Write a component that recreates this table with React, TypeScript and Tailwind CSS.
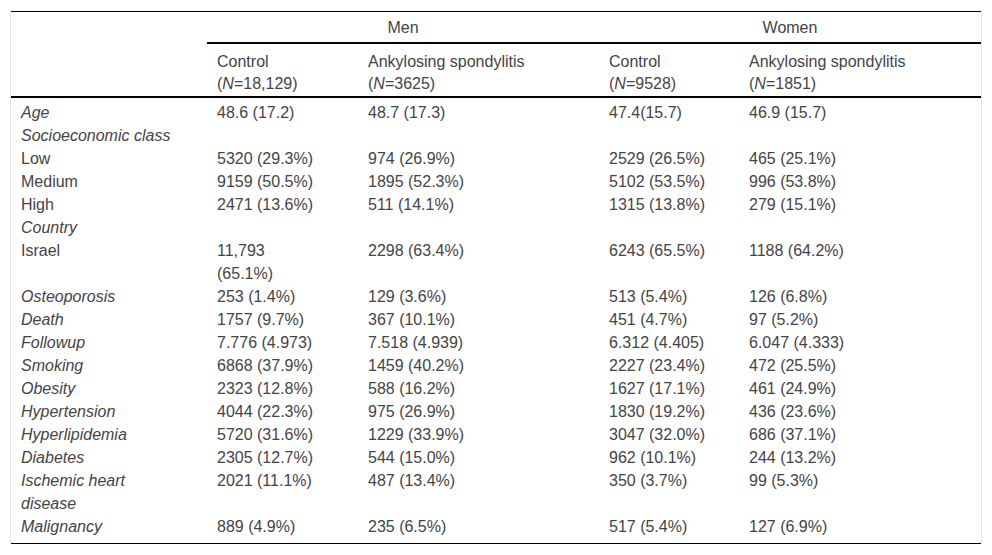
import { Fragment } from "react";

type Row = {
  label: string;
  italic?: boolean;
  cells?: string[];
};

const rows: Row[] = [
  { label: "Age", italic: true, cells: ["48.6 (17.2)", "48.7 (17.3)", "47.4(15.7)", "46.9 (15.7)"] },
  { label: "Socioeconomic class", italic: true },
  { label: "Low", cells: ["5320 (29.3%)", "974 (26.9%)", "2529 (26.5%)", "465 (25.1%)"] },
  { label: "Medium", cells: ["9159 (50.5%)", "1895 (52.3%)", "5102 (53.5%)", "996 (53.8%)"] },
  { label: "High", cells: ["2471 (13.6%)", "511 (14.1%)", "1315 (13.8%)", "279 (15.1%)"] },
  { label: "Country", italic: true },
  { label: "Israel", cells: ["11,793\n(65.1%)", "2298 (63.4%)", "6243 (65.5%)", "1188 (64.2%)"] },
  { label: "Osteoporosis", italic: true, cells: ["253 (1.4%)", "129 (3.6%)", "513 (5.4%)", "126 (6.8%)"] },
  { label: "Death", italic: true, cells: ["1757 (9.7%)", "367 (10.1%)", "451 (4.7%)", "97 (5.2%)"] },
  { label: "Followup", italic: true, cells: ["7.776 (4.973)", "7.518 (4.939)", "6.312 (4.405)", "6.047 (4.333)"] },
  { label: "Smoking", italic: true, cells: ["6868 (37.9%)", "1459 (40.2%)", "2227 (23.4%)", "472 (25.5%)"] },
  { label: "Obesity", italic: true, cells: ["2323 (12.8%)", "588 (16.2%)", "1627 (17.1%)", "461 (24.9%)"] },
  { label: "Hypertension", italic: true, cells: ["4044 (22.3%)", "975 (26.9%)", "1830 (19.2%)", "436 (23.6%)"] },
  { label: "Hyperlipidemia", italic: true, cells: ["5720 (31.6%)", "1229 (33.9%)", "3047 (32.0%)", "686 (37.1%)"] },
  { label: "Diabetes", italic: true, cells: ["2305 (12.7%)", "544 (15.0%)", "962 (10.1%)", "244 (13.2%)"] },
  { label: "Ischemic heart\ndisease", italic: true, cells: ["2021 (11.1%)", "487 (13.4%)", "350 (3.7%)", "99 (5.3%)"] },
  { label: "Malignancy", italic: true, cells: ["889 (4.9%)", "235 (6.5%)", "517 (5.4%)", "127 (6.9%)"] },
];

function Lines({ text }: { text: string }) {
  return (
    <>
      {text.split("\n").map((p, i) => (
        <Fragment key={i}>
          {i > 0 && <br />}
          {p}
        </Fragment>
      ))}
    </>
  );
}

function GroupHead({ n }: { n: string }) {
  return (
    <>
      <br />(<i>N</i>={n})
    </>
  );
}

export default function App() {
  return (
    <div className="min-h-[555px] bg-white pl-[10px] pt-[11px] font-['Liberation_Sans',Arial,sans-serif] text-[16px] text-[#444]">
      <div className="w-[972px] border-x border-[#e3e3e3]">
        <table className="w-[970px] table-fixed border-collapse text-left">
          <colgroup>
            <col className="w-[196px]" />
            <col className="w-[151px]" />
            <col className="w-[241px]" />
            <col className="w-[140px]" />
            <col className="w-[242px]" />
          </colgroup>
          <thead>
            <tr className="border-t border-black">
              <th rowSpan={2} className="border-b-2 border-black" />
              <th colSpan={2} className="border-b-2 border-black px-[10px] pt-[5px] pb-[3px] text-center font-normal leading-[22px]">
                Men
              </th>
              <th colSpan={2} className="border-b-2 border-black px-[10px] pt-[5px] pb-[3px] text-center font-normal leading-[22px]">
                Women
              </th>
            </tr>
            <tr className="border-b-2 border-black align-top">
              <th className="px-[10px] pt-[7px] pb-[1px] font-normal leading-[22px]">
                Control
                <GroupHead n="18,129" />
              </th>
              <th className="px-[10px] pt-[7px] pb-[1px] font-normal leading-[22px]">
                Ankylosing spondylitis
                <GroupHead n="3625" />
              </th>
              <th className="px-[10px] pt-[7px] pb-[1px] font-normal leading-[22px]">
                Control
                <GroupHead n="9528" />
              </th>
              <th className="px-[10px] pt-[7px] pb-[1px] font-normal leading-[22px]">
                Ankylosing spondylitis
                <GroupHead n="1851" />
              </th>
            </tr>
          </thead>
          <tbody className="border-b border-black">
            {rows.map((r, i) => {
              const pad = i === 0 ? "pt-[3px]" : i === rows.length - 1 ? "pb-[5px]" : "";
              return (
                <tr key={i} className="align-top leading-[23px]">
                  <td className={`px-[10px] ${pad} ${r.italic ? "italic" : ""}`}>
                    <Lines text={r.label} />
                  </td>
                  {[0, 1, 2, 3].map((c) => (
                    <td key={c} className={`px-[10px] ${pad}`}>
                      {r.cells ? <Lines text={r.cells[c]} /> : null}
                    </td>
                  ))}
                </tr>
              );
            })}
          </tbody>
        </table>
      </div>
    </div>
  );
}
